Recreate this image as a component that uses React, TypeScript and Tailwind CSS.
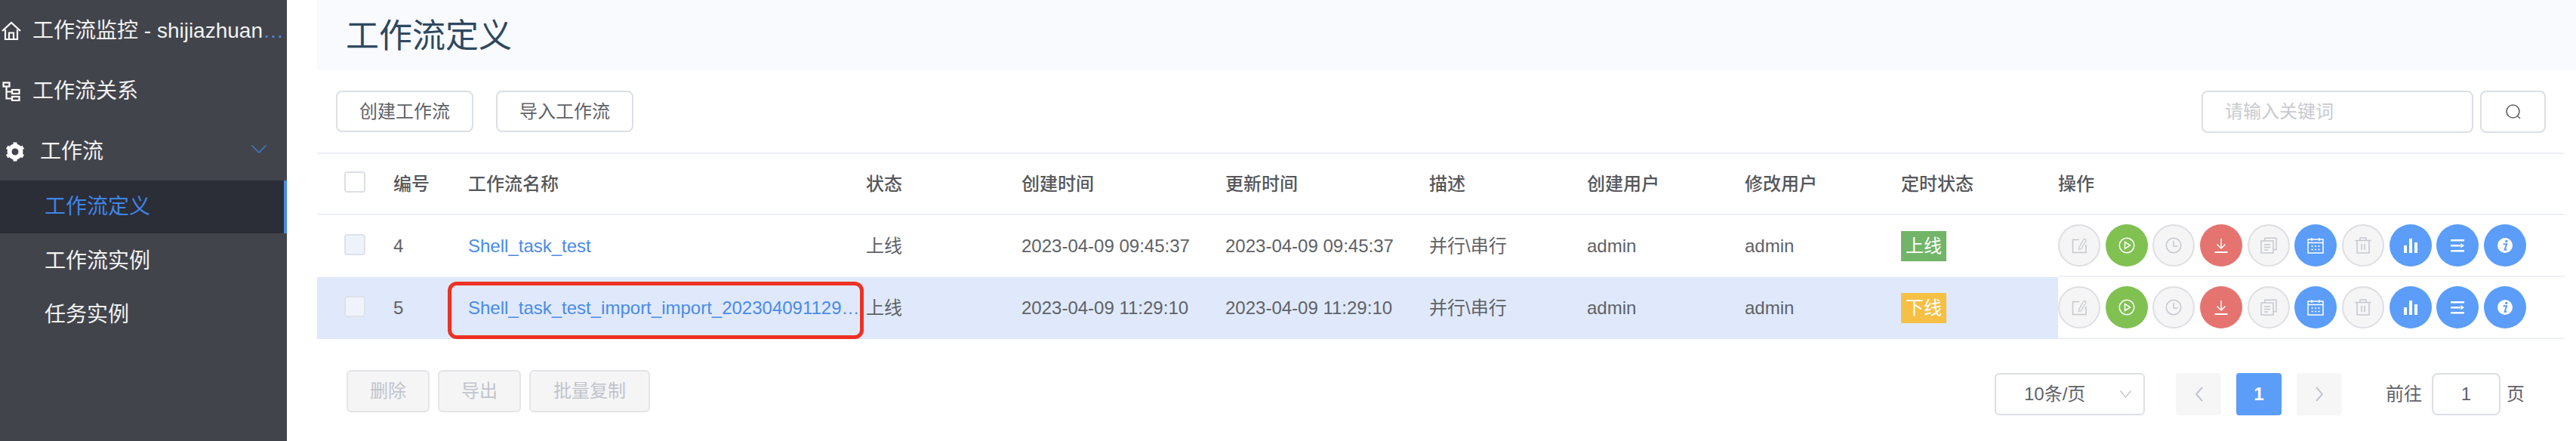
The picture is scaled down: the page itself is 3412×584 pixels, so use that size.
import React from "react";

interface Workflow {
  id: number;
  name: string;
  created: string;
  updated: string;
  cronOnline: boolean;
}

const workflows: Workflow[] = [
  { id: 4, name: "Shell_task_test", created: "2023-04-09 09:45:37", updated: "2023-04-09 09:45:37", cronOnline: true },
  { id: 5, name: "Shell_task_test_import_import_20230409112910", created: "2023-04-09 11:29:10", updated: "2023-04-09 11:29:10", cronOnline: false },
];

function Icon({ children }: { children: React.ReactNode }) {
  return (
    <svg width="22" height="22" viewBox="0 0 22 22" fill="none" stroke="currentColor" strokeWidth="1.5">
      {children}
    </svg>
  );
}

function ActionButton({ tone, children }: { tone: "off" | "green" | "red" | "blue"; children: React.ReactNode }) {
  const toneClass = {
    off: "bg-[#f5f5f5] border-2 border-[#dedfe3] text-[#c5c8cf]",
    green: "bg-[#80c152] text-white",
    red: "bg-[#e57470] text-white",
    blue: "bg-[#5b9df9] text-white",
  }[tone];
  return (
    <button className={`flex h-[56px] w-[56px] shrink-0 items-center justify-center rounded-full ${toneClass}`}>
      {children}
    </button>
  );
}

function RowActions() {
  return (
    <div className="flex gap-[6.67px]">
      <ActionButton tone="off">
        <Icon>
          <path d="M11 3.5H2.5V20.5H20V10" />
          <path d="M10.5 14L16.5 3.5a1.8 1.8 0 0 1 3.2 1.8L13.5 15.5L10.5 16.5Z" strokeWidth="1.2" />
        </Icon>
      </ActionButton>
      <ActionButton tone="green">
        <Icon>
          <circle cx="11" cy="11" r="9.75" />
          <path d="M8.5 6.5L15.5 11L8.5 15.5Z" />
        </Icon>
      </ActionButton>
      <ActionButton tone="off">
        <Icon>
          <circle cx="11" cy="11" r="9.75" />
          <path d="M11 5V12H16.5" />
        </Icon>
      </ActionButton>
      <ActionButton tone="red">
        <Icon>
          <path d="M11 2V14.5M5.5 9.5L11 15L16.5 9.5" />
          <path d="M2.5 20H19.5" strokeWidth="2" />
        </Icon>
      </ActionButton>
      <ActionButton tone="off">
        <Icon>
          <path d="M6 5V1.2H21V16.5H17.2" />
          <rect x="1" y="5" width="16" height="16" />
          <path d="M5 10H13M5 13.5H13M5 17H10" />
        </Icon>
      </ActionButton>
      <ActionButton tone="blue">
        <Icon>
          <rect x="1" y="3" width="20" height="18" />
          <path d="M1 7.5H21M6 1V5M16 1V5" />
          <path d="M5.5 12H16.5M5.5 16.5H16.5" strokeDasharray="2.2 2.2" />
        </Icon>
      </ActionButton>
      <ActionButton tone="off">
        <Icon>
          <path d="M0.5 4.5H21.5M7 4.5V1H15V4.5M3 4.5V21H19V4.5M9 9V17M13 9V17" />
        </Icon>
      </ActionButton>
      <ActionButton tone="blue">
        <svg width="22" height="22" viewBox="0 0 22 22" fill="currentColor">
          <rect x="2" y="11" width="4" height="10" />
          <rect x="9" y="2" width="4" height="19" />
          <rect x="16" y="7" width="4" height="14" />
        </svg>
      </ActionButton>
      <ActionButton tone="blue">
        <svg width="22" height="22" viewBox="0 0 22 22" fill="currentColor">
          <rect x="2" y="3" width="18" height="2.5" />
          <rect x="2" y="10" width="13" height="2.5" />
          <path d="M15.5 8L20 11.2L15.5 14.5Z" />
          <rect x="2" y="17" width="18" height="2.5" />
        </svg>
      </ActionButton>
      <ActionButton tone="blue">
        <svg width="22" height="22" viewBox="0 0 22 22">
          <circle cx="11" cy="11" r="10" fill="currentColor" />
          <circle cx="12.8" cy="5.4" r="1.7" fill="#5b9df9" />
          <path d="M8.6 9.2H13.2L10.6 16.8H13.2" fill="none" stroke="#5b9df9" strokeWidth="2" />
        </svg>
      </ActionButton>
    </div>
  );
}

function Checkbox({ disabled, tint }: { disabled?: boolean; tint?: string }) {
  return (
    <span
      className={`relative -top-[4px] inline-block h-[28px] w-[28px] rounded-[4px] border-2 align-middle ${
        disabled ? "border-[#dfe2ea]" : "border-[#dcdfe6] bg-white"
      } ${tint ?? ""}`}
    />
  );
}

function SidebarItem({ icon, label, indent }: { icon: React.ReactNode; label: string; indent: string }) {
  return (
    <div className="flex h-[80px] items-center pt-[2px] text-[28px] text-[#f2f2f2]">
      {icon}
      <span className={indent}>{label}</span>
    </div>
  );
}

function Sidebar() {
  return (
    <aside className="w-[380px] shrink-0 bg-[#42444b]">
      <div className="flex h-[80px] items-center pt-[2px] text-[28px]">
        <svg className="ml-[2px] shrink-0 text-white" width="26" height="26" viewBox="0 0 26 26" fill="none" stroke="currentColor" strokeWidth="2.2">
          <path d="M1 13L13 2L25 13" />
          <path d="M5 11V24H21V11M10 24V15.5H16V24" />
        </svg>
        <span className="ml-[15px] w-[336px] truncate text-[#4a86d8]">
          <span className="text-[#f2f2f2]">工作流监控 - shijiazhuang_test</span>
        </span>
      </div>
      <SidebarItem
        label="工作流关系"
        indent="ml-[16px]"
        icon={
          <svg className="ml-[3px] shrink-0 text-white" width="24" height="26" viewBox="0 0 24 26" fill="none" stroke="currentColor" strokeWidth="2.2">
            <rect x="1.5" y="1.5" width="8" height="5" />
            <rect x="13" y="11" width="9.5" height="5" />
            <rect x="13" y="20" width="9.5" height="5" />
            <path d="M5.5 6.5V22.5H13M5.5 13.5H13" />
          </svg>
        }
      />
      <div className="flex h-[79px] items-center pt-[2px] text-[28px] text-[#f2f2f2]">
        <svg className="ml-[7px] shrink-0 text-white" width="26" height="26" viewBox="0 0 26 26" fill="none" stroke="currentColor">
          <circle cx="13" cy="13" r="7.5" strokeWidth="6" />
          <path d="M13 0.5V5M13 21V25.5M2.2 6.8L6 9M20 17L23.8 19.2M2.2 19.2L6 17M20 9L23.8 6.8" strokeWidth="5" />
        </svg>
        <span className="ml-[20px]">工作流</span>
        <svg className="ml-[196px] -translate-y-[3px] text-[#3d7cc9]" width="20" height="11" viewBox="0 0 20 11" fill="none" stroke="currentColor" strokeWidth="1.5">
          <path d="M0.5 0.5L10 10L19.5 0.5" />
        </svg>
      </div>
      <div className="flex h-[70px] items-center border-r-4 border-[#4a8af0] bg-[#2b2d37] pl-[59px] text-[28px] text-[#3f85e6]">
        工作流定义
      </div>
      <div className="flex h-[71px] items-center pt-[2px] pl-[59px] text-[28px] text-[#f2f2f2]">工作流实例</div>
      <div className="flex h-[71px] items-center pt-[2px] pl-[59px] text-[28px] text-[#f2f2f2]">任务实例</div>
    </aside>
  );
}

function Toolbar() {
  return (
    <div className="flex h-[109px] justify-between pl-[25px] pr-[40px] pt-[27px]">
      <div className="flex gap-[30px]">
        <button className="h-[55px] w-[182px] rounded-[8px] border-2 border-[#dcdfe6] text-[24px] text-[#606266]">创建工作流</button>
        <button className="h-[55px] w-[182px] rounded-[8px] border-2 border-[#dcdfe6] text-[24px] text-[#606266]">导入工作流</button>
      </div>
      <div className="flex gap-[9px]">
        <div className="flex h-[56px] w-[360px] items-center rounded-[8px] border-2 border-[#dcdfe6] pl-[29px] text-[24px] text-[#c8cad0]">
          请输入关键词
        </div>
        <button className="flex h-[56px] w-[87px] items-center justify-center rounded-[8px] border-2 border-[#dcdfe6] text-[#606266]">
          <svg width="20" height="20" viewBox="0 0 20 20" fill="none" stroke="currentColor" strokeWidth="1.6">
            <circle cx="9.5" cy="9.5" r="8.5" />
            <path d="M15.5 15.5L19 19" />
          </svg>
        </button>
      </div>
    </div>
  );
}

function WorkflowTable() {
  const heads = ["编号", "工作流名称", "状态", "创建时间", "更新时间", "描述", "创建用户", "修改用户", "定时状态", "操作"];
  return (
    <table className="w-[2977px] table-fixed border-separate border-spacing-0 text-left text-[24px] text-[#606266]">
      <colgroup>
        <col className="w-[101px]" />
        <col className="w-[99px]" />
        <col className="w-[527px]" />
        <col className="w-[206px]" />
        <col className="w-[270px]" />
        <col className="w-[270px]" />
        <col className="w-[209px]" />
        <col className="w-[209px]" />
        <col className="w-[207px]" />
        <col className="w-[208px]" />
        <col className="w-[671px]" />
      </colgroup>
      <thead>
        <tr>
          <th className="h-[83px] border-y-2 border-[#eef0f7] pl-[36px]">
            <Checkbox />
          </th>
          {heads.map((head) => (
            <th key={head} className="h-[83px] border-y-2 border-[#eef0f7] font-medium text-[#55575b]">
              {head}
            </th>
          ))}
        </tr>
      </thead>
      <tbody>
        {workflows.map((wf, index) => {
          const marked = index === 1;
          const rowBg = marked ? "bg-[#dfe9fb]" : "";
          return (
            <tr key={wf.id}>
              <td className={`h-[82px] pl-[36px] ${rowBg}`}>
                <Checkbox disabled tint={marked ? "bg-[#eff3fc]" : "bg-[#eef2fb]"} />
              </td>
              <td className={rowBg}>{wf.id}</td>
              <td className={`relative pr-[8px] ${rowBg}`}>
                <div className="truncate text-[#4a8bea]">{wf.name}</div>
                {marked && (
                  <span className="pointer-events-none absolute -left-[27px] bottom-0 right-[3px] top-[6px] rounded-[12px] border-[5px] border-[#ee3124]" />
                )}
              </td>
              <td className={rowBg}>上线</td>
              <td className={rowBg}>{wf.created}</td>
              <td className={rowBg}>{wf.updated}</td>
              <td className={rowBg}>并行\串行</td>
              <td className={rowBg}>admin</td>
              <td className={rowBg}>admin</td>
              <td className={rowBg}>
                <span
                  className={`flex h-[40px] w-[60px] items-center justify-center text-[24px] text-white ${
                    wf.cronOnline ? "bg-[#72b568]" : "bg-[#f5c044]"
                  }`}
                >
                  {wf.cronOnline ? "上线" : "下线"}
                </span>
              </td>
              <td className="border-b-2 border-[#eef0f7] bg-white">
                <RowActions />
              </td>
            </tr>
          );
        })}
      </tbody>
    </table>
  );
}

function Footer() {
  const disabledBtn = "h-[56px] rounded-[6px] border-2 border-[#e4e5e8] bg-[#f5f5f5] text-[24px] text-[#c0c4cc]";
  return (
    <div className="flex justify-between pl-[39px] pr-[68px] pt-[41px]">
      <div className="flex gap-[11px]">
        <button className={`${disabledBtn} w-[110px]`}>删除</button>
        <button className={`${disabledBtn} w-[110px]`}>导出</button>
        <button className={`${disabledBtn} w-[160px]`}>批量复制</button>
      </div>
      <div className="mt-[4px] flex h-[56px] items-center text-[24px] text-[#606266]">
        <div className="flex h-[56px] w-[199px] items-center justify-between rounded-[6px] border-2 border-[#dcdfe6] pl-[37px] pr-[16px]">
          <span>10条/页</span>
          <svg className="text-[#c0c4cc]" width="15" height="10" viewBox="0 0 15 10" fill="none" stroke="currentColor" strokeWidth="1.3">
            <path d="M0.5 0.5L7.5 9L14.5 0.5" />
          </svg>
        </div>
        <button className="ml-[41px] flex h-[56px] w-[60px] items-center justify-center rounded-[4px] bg-[#f6f6f7] text-[#c0c4cc]">
          <svg width="11" height="20" viewBox="0 0 11 20" fill="none" stroke="currentColor" strokeWidth="2">
            <path d="M10 1L2 10L10 19" />
          </svg>
        </button>
        <button className="ml-[20px] flex h-[56px] w-[60px] items-center justify-center rounded-[4px] bg-[#5b9df9] font-bold text-white">
          1
        </button>
        <button className="ml-[20px] flex h-[56px] w-[60px] items-center justify-center rounded-[4px] bg-[#f6f6f7] text-[#c0c4cc]">
          <svg width="11" height="20" viewBox="0 0 11 20" fill="none" stroke="currentColor" strokeWidth="2">
            <path d="M1 1L9 10L1 19" />
          </svg>
        </button>
        <span className="ml-[58px]">前往</span>
        <div className="ml-[13px] flex h-[56px] w-[91px] items-center justify-center rounded-[8px] border-2 border-[#dcdfe6]">1</div>
        <span className="ml-[8px]">页</span>
      </div>
    </div>
  );
}

export default function App() {
  return (
    <div className="flex h-[584px] w-[3412px] overflow-hidden bg-white font-['Liberation_Sans','Noto_Sans_CJK_SC',sans-serif]">
      <Sidebar />
      <main className="ml-[40px] min-w-0 flex-1">
        <header className="flex h-[93px] items-center bg-[#f8fafe] pl-[38px] pt-[2px] text-[44px] text-[#2f4860]">工作流定义</header>
        <Toolbar />
        <WorkflowTable />
        <Footer />
      </main>
    </div>
  );
}
